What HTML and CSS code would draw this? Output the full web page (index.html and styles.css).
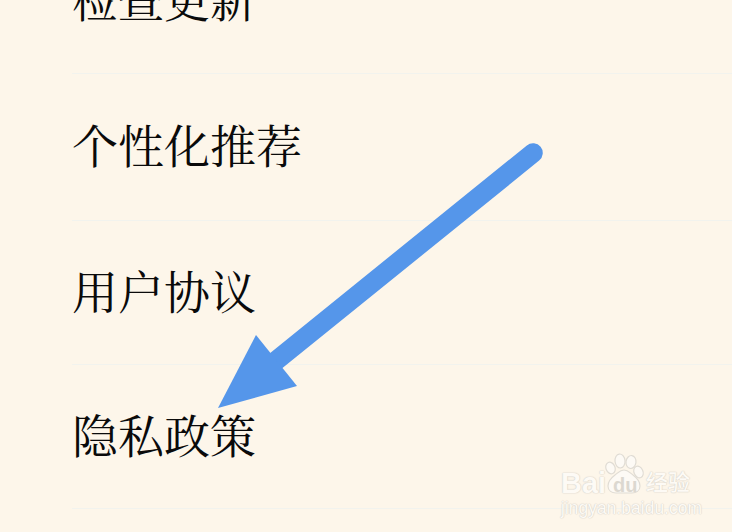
FILE: index.html
```html
<!DOCTYPE html>
<html lang="zh-CN">
<head>
<meta charset="utf-8">
<title>设置</title>
<link rel="stylesheet" href="styles.css">
</head>
<body>
<main class="page">
  <ul class="menu">
    <li class="row row-first"><span class="label">检查更新</span></li>
    <li class="row row-tall"><span class="label">个性化推荐</span></li>
    <li class="row"><span class="label">用户协议</span></li>
    <li class="row"><span class="label">隐私政策</span></li>
  </ul>
  <svg class="arrow" viewBox="0 0 732 532" aria-hidden="true">
    <line x1="533" y1="153" x2="272" y2="364" class="arrow-line"/>
    <polygon points="218,408 256,335 297,386" class="arrow-head"/>
  </svg>
  <div class="mark">
    <div class="mark-top">
      <span class="mark-bai">Bai</span>
      <span class="mark-paw">
        <svg viewBox="0 0 40 42" class="paw" aria-hidden="true">
          <ellipse cx="5.5" cy="15" rx="4.5" ry="6" transform="rotate(-22 5.5 15)"/>
          <ellipse cx="15" cy="8" rx="5" ry="7" transform="rotate(-6 15 8)"/>
          <ellipse cx="26" cy="9" rx="5" ry="6.5" transform="rotate(8 26 9)"/>
          <ellipse cx="33.5" cy="19" rx="4.5" ry="6" transform="rotate(-24 33.5 19)"/>
          <path d="M19 17c4 0 6 3 9 5 4 3 7 6 7 11 0 5-4 7-8 7H11c-4 0-8-2-8-7 0-5 3-8 7-11 3-2 5-5 9-5z"/>
        </svg>
        <span class="mark-du">du</span>
      </span>
      <span class="mark-cn">经验</span>
    </div>
    <div class="mark-url">jingyan.baidu.com</div>
  </div>
</main>
</body>
</html>
```
FILE: styles.css
```css
* { box-sizing: border-box; }
html, body { margin: 0; padding: 0; }
.page {
  position: relative;
  width: 732px;
  height: 532px;
  overflow: hidden;
  background: #fdf6ea;
  font-family: "Noto Serif CJK SC", "Noto Sans CJK SC", "Liberation Serif", serif;
}
.menu {
  list-style: none;
  margin: -71px 0 0 72px;
  padding: 0;
}
.row {
  display: flex;
  align-items: center;
  height: 144px;
  border-bottom: 1px solid #f2f3ee;
  font-size: 46px;
  line-height: 1;
  color: #0a0a0a;
}
.label { padding-bottom: 8px; }
.row-first { height: 145px; }
.row-tall { height: 147px; }
.arrow {
  position: absolute;
  left: 0;
  top: 0;
  width: 732px;
  height: 532px;
}
.arrow-line { stroke: #5596ea; stroke-width: 19.5; stroke-linecap: round; }
.arrow-head { fill: #5596ea; }
.mark {
  position: absolute;
  left: 561px;
  top: 453px;
  width: 132px;
  color: #fdfaf5;
  font-family: "Liberation Sans", "Noto Sans CJK SC", sans-serif;
  text-shadow: 0 0 1.5px #cfcbc3, 0 0 1px #d8d4cc;
}
.mark-top {
  display: flex;
  align-items: flex-start;
  height: 44px;
}
.mark-bai { font-size: 29px; line-height: 30px; font-weight: 700; width: 44px; margin-top: 15px; }
.mark-paw { position: relative; width: 40px; height: 44px; flex: none; }
.paw { position: absolute; left: 0; top: 0; width: 40px; height: 42px; fill: #fdfaf5; stroke: #e0dcd4; stroke-width: 1.2; }
.mark-du {
  position: absolute;
  left: 8px;
  top: 22px;
  font-size: 20px;
  line-height: 20px;
  font-weight: 700;
  color: #dcd8d0;
  text-shadow: none;
}
.mark-cn { font-size: 22px; line-height: 30px; font-weight: 500; margin: 15px 0 0 1px; white-space: nowrap; }
.mark-url { margin-top: 2px; font-size: 17.5px; line-height: 18px; white-space: nowrap; }
```
